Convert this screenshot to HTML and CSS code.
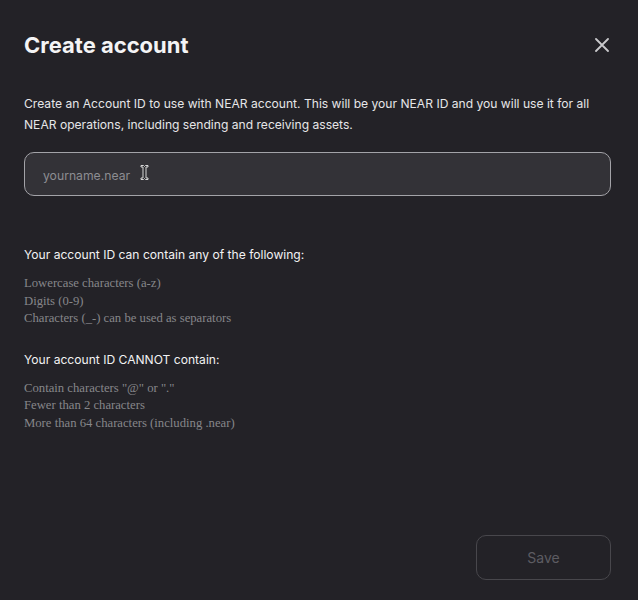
FILE: index.html
```html
<!DOCTYPE html>
<html>
<head>
<meta charset="utf-8">
<link rel="stylesheet" href="styles.css">
</head>
<body>
<div class="modal">
  <div class="header">
    <h1 class="title">Create account</h1>
    <button class="close" aria-label="Close">
      <svg width="14" height="14" viewBox="0 0 14 14"><path d="M1 1L13 13M13 1L1 13" stroke="#c9c9cc" stroke-width="1.8" stroke-linecap="round"/></svg>
    </button>
  </div>
  <p class="desc">Create an Account ID to use with NEAR account. This will be your NEAR ID and you will use it for all NEAR operations, including sending and receiving assets.</p>
  <div class="field">
    <span class="placeholder">yourname.near</span>
    <svg class="cursor" width="9" height="17" viewBox="0 0 9 17"><path d="M1 1.5h2.5l1 1 1-1H8v1.5H6V14h2v1.5H5.5l-1-1-1 1H1V14h2V3H1z" fill="#2b2b2f" stroke="#d8d8d8" stroke-width="1"/></svg>
  </div>
  <div class="rules">
    <h2 class="rule-title">Your account ID can contain any of the following:</h2>
    <ul class="rule-list">
      <li>Lowercase characters (a-z)</li>
      <li>Digits (0-9)</li>
      <li>Characters (_-) can be used as separators</li>
    </ul>
    <h2 class="rule-title">Your account ID CANNOT contain:</h2>
    <ul class="rule-list">
      <li>Contain characters "@" or "."</li>
      <li>Fewer than 2 characters</li>
      <li>More than 64 characters (including .near)</li>
    </ul>
  </div>
  <div class="footer">
    <button class="save" disabled>Save</button>
  </div>
</div>
</body>
</html>
```
FILE: styles.css
```css
html, body {
  margin: 0;
  padding: 0;
  background: #232227;
  height: 100%;
}
.modal {
  box-sizing: border-box;
  height: 600px;
  padding: 31px 27px 20px 24px;
  display: flex;
  flex-direction: column;
  font-family: Inter, "Noto Sans", sans-serif;
  color: #f2f2f3;
}
.header {
  display: flex;
  align-items: center;
  justify-content: space-between;
  height: 28px;
}
.title {
  margin: 0;
  font-size: 22px;
  font-weight: 700;
  color: #f4f4f5;
}
.close {
  background: none;
  border: 0;
  padding: 0;
  margin-right: 2px;
  width: 14px;
  height: 14px;
  display: flex;
}
.desc {
  margin: 34px 0 0;
  font-size: 12.1px;
  line-height: 21px;
  color: #e6e6e8;
}
.field {
  margin-top: 17px;
  height: 44px;
  box-sizing: border-box;
  border: 1.5px solid #a3a3a8;
  border-radius: 10px;
  background: #333237;
  display: flex;
  align-items: center;
  padding-left: 18px;
  gap: 10px;
}
.placeholder {
  font-size: 12.2px;
  color: #8d8d92;
  padding-top: 2px;
}
.cursor {
  margin-top: -4px;
}
.rules {
  margin-top: 50px;
}
.rule-title {
  margin: 0;
  font-size: 12.1px;
  font-weight: 400;
  line-height: 18px;
  color: #f2f2f3;
}
.rule-list {
  list-style: none;
  margin: 11px 0 23px;
  padding: 0;
  font-family: "Liberation Serif", serif;
  font-size: 12.7px;
  line-height: 17.5px;
  color: #86868a;
}
.footer {
  margin-top: auto;
  display: flex;
  justify-content: flex-end;
}
.save {
  width: 135px;
  height: 45px;
  box-sizing: border-box;
  background: transparent;
  border: 1px solid #48474c;
  border-radius: 10px;
  font-family: Inter, "Noto Sans", sans-serif;
  font-size: 14px;
  color: #5d5c62;
}
```
